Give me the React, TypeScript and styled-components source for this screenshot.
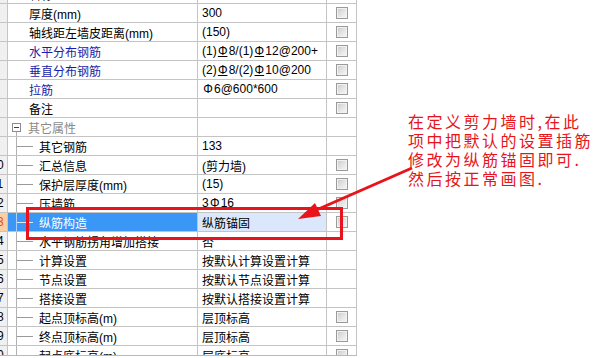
import styled, { createGlobalStyle } from 'styled-components';

const GlobalStyle = createGlobalStyle`
  html, body {
    margin: 0;
    padding: 0;
    background: #ffffff;
  }
  body {
    font-family: "Liberation Sans", "Noto Sans CJK SC", sans-serif;
    font-size: 12px;
    color: #000;
  }
`;

type Level = 'top' | 'group' | 'child';

interface Row {
  num?: number;
  name: string;
  value?: React.ReactNode;
  level: Level;
  blue?: boolean;
  check?: boolean;
  selected?: boolean;
}

// 钢筋符号：带下横线的是二级钢，不带的是一级钢
const Bar = () => <Grade>Φ</Grade>;
const Round = () => <Plain>Φ</Plain>;

const rows: Row[] = [
  { name: '名称', value: '', level: 'top' },
  { name: '厚度(mm)', value: '300', level: 'top', check: true },
  { name: '轴线距左墙皮距离(mm)', value: '(150)', level: 'top', check: true },
  { name: '水平分布钢筋', value: <>(1)<Bar />8/(1)<Bar />12@200+</>, level: 'top', blue: true, check: true },
  { name: '垂直分布钢筋', value: <>(2)<Bar />8/(2)<Bar />10@200</>, level: 'top', blue: true, check: true },
  { name: '拉筋', value: <><Round />6@600*600</>, level: 'top', blue: true, check: true },
  { name: '备注', value: '', level: 'top', check: true },
  { name: '其它属性', level: 'group' },
  { name: '其它钢筋', value: '133', level: 'child' },
  { num: 10, name: '汇总信息', value: '(剪力墙)', level: 'child', check: true },
  { num: 11, name: '保护层厚度(mm)', value: '(15)', level: 'child', check: true },
  { num: 12, name: '压墙筋', value: <>3<Bar />16</>, level: 'child', check: true },
  { num: 13, name: '纵筋构造', value: '纵筋锚固', level: 'child', check: true, selected: true },
  { num: 14, name: '水平钢筋拐角增加搭接', value: '否', level: 'child' },
  { num: 15, name: '计算设置', value: '按默认计算设置计算', level: 'child' },
  { num: 16, name: '节点设置', value: '按默认节点设置计算', level: 'child' },
  { num: 17, name: '搭接设置', value: '按默认搭接设置计算', level: 'child' },
  { num: 18, name: '起点顶标高(m)', value: '层顶标高', level: 'child', check: true },
  { num: 19, name: '终点顶标高(m)', value: '层顶标高', level: 'child', check: true },
  { num: 20, name: '起点底标高(m)', value: '层底标高', level: 'child', check: true },
];

export default function App() {
  return (
    <Page>
      <GlobalStyle />
      <GridPanel>
        <Table>
          {rows.map((row, i) => (
            <TableRow key={i}>
              <NumCell $selected={row.selected}>
                <NumText>{row.num ?? ''}</NumText>
              </NumCell>
              <NameCell $selected={row.selected} $level={row.level}>
                {row.level === 'group' && <Toggle />}
                {row.level === 'child' && <Branch $selected={row.selected} />}
                <NameText $blue={row.blue} $group={row.level === 'group'} $selected={row.selected}>
                  {row.name}
                </NameText>
              </NameCell>
              <ValueCell $selected={row.selected}>{row.value}</ValueCell>
              <CheckCell>{row.check && <CheckBox />}</CheckCell>
            </TableRow>
          ))}
        </Table>
      </GridPanel>
      <Note>
        在定义剪力墙时,在此
        <br />
        项中把默认的设置插筋
        <br />
        修改为纵筋锚固即可.
        <br />
        然后按正常画图.
      </Note>
      <Marks width="605" height="358" viewBox="0 0 605 358">
        <rect x="27.5" y="208.5" width="314" height="30" fill="none" stroke="#e8131b" strokeWidth="3" />
        <line x1="412" y1="168" x2="314" y2="211" stroke="#e8131b" strokeWidth="3" />
        <polygon points="298,219 321,216 315,203" fill="#e8131b" />
      </Marks>
    </Page>
  );
}

const Page = styled.div`
  position: relative;
  width: 605px;
  height: 358px;
  overflow: hidden;
  display: flex;
  align-items: flex-start;
  background: #fff;
`;

const GridPanel = styled.div`
  width: 357px;
  height: 355px;
  overflow: hidden;
  border-bottom: 1px solid #b9b9b9;
  flex-shrink: 0;
`;

const Table = styled.div`
  margin-top: -15px;
  display: flex;
  flex-direction: column;
`;

const TableRow = styled.div`
  display: grid;
  grid-template-columns: 8px 190px 129px 30px;
  height: 19px;
`;

const Cell = styled.div`
  box-sizing: border-box;
  border-right: 1px solid #c4c4c4;
  border-bottom: 1px solid #c4c4c4;
  height: 19px;
  display: flex;
  align-items: center;
  overflow: hidden;
  white-space: nowrap;
`;

const NumCell = styled(Cell)<{ $selected?: boolean }>`
  background: ${(p) => (p.$selected ? '#f9cfa3' : '#f0f0f0')};
  color: ${(p) => (p.$selected ? '#e0541c' : '#000')};
`;

const NumText = styled.span`
  flex-shrink: 0;
  width: 22px;
  margin-left: -14px;
  text-align: center;
`;

const NameCell = styled(Cell)<{ $selected?: boolean; $level: Level }>`
  position: relative;
  background: ${(p) => (p.$selected ? '#3a97f6' : '#fff')};
  padding-left: ${(p) => (p.$level === 'top' ? '21px' : p.$level === 'group' ? '4px' : '0')};
`;

const NameText = styled.span<{ $blue?: boolean; $group?: boolean; $selected?: boolean }>`
  color: ${(p) => (p.$selected ? '#fff' : p.$blue ? '#1c1ca8' : p.$group ? '#8a8a8a' : '#000')};
  margin-left: ${(p) => (p.$group ? '7px' : '0')};
`;

const Toggle = styled.span`
  position: relative;
  box-sizing: border-box;
  width: 9px;
  height: 9px;
  border: 1px solid #8c8c8c;
  background: #fff;
  flex-shrink: 0;
  &::before {
    content: '';
    position: absolute;
    left: 1px;
    top: 3px;
    width: 5px;
    height: 1px;
    background: #404040;
  }
  &::after {
    content: '';
    position: absolute;
    left: 3px;
    top: 8px;
    width: 1px;
    height: 6px;
    background: #b0b0b0;
  }
`;

const Branch = styled.span<{ $selected?: boolean }>`
  position: relative;
  flex-shrink: 0;
  width: 31px;
  height: 100%;
  &::before {
    content: '';
    position: absolute;
    left: 8px;
    top: 0;
    bottom: -1px;
    width: 1px;
    background: ${(p) => (p.$selected ? '#a8d0fb' : '#b0b0b0')};
  }
  &::after {
    content: '';
    position: absolute;
    left: 9px;
    top: 9px;
    width: 16px;
    height: 1px;
    background: ${(p) => (p.$selected ? '#d8eafd' : '#9a9a9a')};
  }
`;

const ValueCell = styled(Cell)<{ $selected?: boolean }>`
  padding-left: 4px;
  background: ${(p) => (p.$selected ? '#dbe8fb' : '#fff')};
`;

const CheckCell = styled(Cell)`
  justify-content: center;
`;

const CheckBox = styled.span`
  box-sizing: border-box;
  width: 12px;
  height: 12px;
  border: 1px solid #9a9a9a;
  background: linear-gradient(135deg, #c9c9c9 0%, #e6e6e6 55%, #f7f7f7 100%);
  box-shadow: inset 0 0 0 1px #f2f2f2;
`;

const Grade = styled.span`
  display: inline-block;
  width: 12px;
  text-align: center;
  text-decoration: underline;
  text-underline-offset: 1px;
`;

const Plain = styled.span`
  display: inline-block;
  width: 12px;
  text-align: center;
`;

const Note = styled.div`
  margin: 112px 0 0 51px;
  font-family: "Noto Sans CJK SC", sans-serif;
  font-size: 16px;
  line-height: 19px;
  letter-spacing: 2.5px;
  color: #e8131b;
  white-space: nowrap;
`;

const Marks = styled.svg`
  position: absolute;
  left: 0;
  top: 0;
  pointer-events: none;
`;
